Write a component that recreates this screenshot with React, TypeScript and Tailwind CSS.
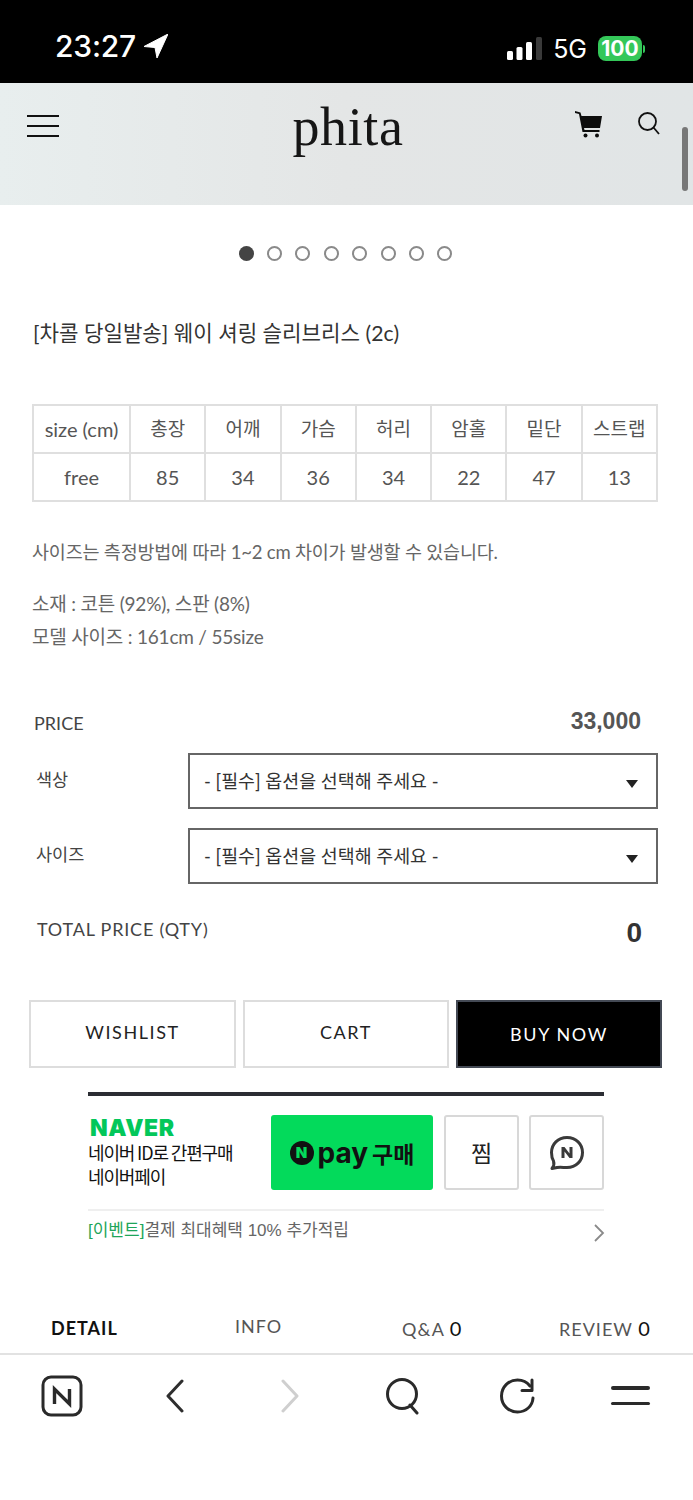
const sizeHead = ['size (cm)', '총장', '어깨', '가슴', '허리', '암홀', '밑단', '스트랩']
const sizeRow = ['free', '85', '34', '36', '34', '22', '47', '13']

function StatusBar() {
  return (
    <div className="flex h-[83px] items-start justify-between bg-black pl-[55px] pr-[48px] pt-[29px] text-white font-['Inter',sans-serif]">
      <div className="flex items-center gap-[8px]">
        <span className="text-[30px] leading-[34px] font-medium tracking-[-0.2px]">23:27</span>
        <svg width="24" height="24" viewBox="0 0 24 24" fill="white">
          <path d="M24 0 L0 12.5 L11 13.5 L13 24 Z" strokeLinejoin="round" stroke="white" strokeWidth="1" />
        </svg>
      </div>
      <div className="flex items-center pt-[5px] h-[34px]">
        <svg width="35" height="24" viewBox="0 0 35 24" className="mr-[11px]">
          <rect x="0" y="14" width="6" height="9" rx="1.5" fill="white" />
          <rect x="9.5" y="10" width="6" height="13" rx="1.5" fill="white" />
          <rect x="19" y="5" width="6" height="18" rx="1.5" fill="white" />
          <rect x="29" y="0" width="6" height="23" rx="1.5" fill="#3a3a3a" />
        </svg>
        <span className="text-[25px] leading-[30px] mr-[11px]">5G</span>
        <span className="flex h-[25px] w-[44px] items-center justify-center rounded-[8px] bg-[#34c759] text-[21px] leading-none font-bold">100</span>
        <span className="ml-[1px] h-[8px] w-[2px] rounded-r-sm bg-[#34c759]" />
      </div>
    </div>
  )
}

function Header() {
  return (
    <div className="relative flex h-[122px] items-start justify-between bg-gradient-to-r from-[#e8eeee] via-[#e4e6e6] to-[#e1e5e6] pl-[27px] pr-[32px]">
      <div className="mt-[32px] flex w-[32px] flex-col gap-[8px]">
        <span className="h-[2px] bg-[#111]" />
        <span className="h-[2px] bg-[#111]" />
        <span className="h-[2px] bg-[#111]" />
      </div>
      <span className="mt-[10px] ml-[63px] text-[54px] leading-[68px] tracking-[0.6px] text-[#161616] font-['Liberation_Serif',serif]">phita</span>
      <div className="mt-[26px] flex items-start gap-[33px]">
        <svg width="30" height="30" viewBox="0 0 30 30" fill="#0d0d0d">
          <path d="M1 2 L6.5 3.5 L7.5 7 L28 7 L26 19 L10 19 L10.5 21 L25.5 21 L25.5 23 L8.5 23 L5 5 L1 4 Z" />
          <circle cx="11.5" cy="26.5" r="2" />
          <circle cx="23" cy="26.5" r="2" />
        </svg>
        <svg width="24" height="24" viewBox="0 0 24 24" fill="none" stroke="#111" strokeWidth="1.8" className="mt-[2px]">
          <circle cx="10.5" cy="10.5" r="8.5" />
          <path d="M16.5 16.5 L22 23" />
        </svg>
      </div>
      <span className="absolute right-[5px] top-[44px] h-[64px] w-[6px] rounded-full bg-[#777]" />
    </div>
  )
}

function Dots() {
  return (
    <div className="mt-[41px] flex justify-center gap-[13.4px] pr-[2px]">
      <span className="h-[15px] w-[15px] rounded-full bg-[#444]" />
      {[1, 2, 3, 4, 5, 6, 7].map((n) => (
        <span key={n} className="h-[15px] w-[15px] rounded-full border-2 border-[#8a8a8a]" />
      ))}
    </div>
  )
}

function SizeTable() {
  return (
    <table className="mt-[58px] ml-[32px] w-[626px] table-fixed border-collapse text-[20px] text-[#555]">
      <tbody>
        {[sizeHead, sizeRow].map((row, i) => (
          <tr key={i} className="h-[48px]">
            {row.map((cell, j) => (
              <td key={j} className={`border-2 border-[#dfdfdf] p-0 text-center ${j === 0 ? 'w-[97px]' : ''} ${i === 0 && j > 0 ? 'text-[19px]' : ''}`}>
                {cell}
              </td>
            ))}
          </tr>
        ))}
      </tbody>
    </table>
  )
}

function OptionRow({ label }: { label: string }) {
  return (
    <div className="flex h-[56px] items-start">
      <span className="ml-[36px] mt-[15px] w-[152px] text-[17.5px] leading-[24px] text-[#444]">{label}</span>
      <div className="flex h-[56px] w-[470px] items-center justify-between border-2 border-[#666] pl-[14px] pr-[18px] pt-[1px] text-[18.4px] text-[#333]">
        <span>- [필수] 옵션을 선택해 주세요 -</span>
        <span className="mt-[4px] h-0 w-0 border-x-[6px] border-t-[8px] border-x-transparent border-t-[#222]" />
      </div>
    </div>
  )
}

function BuyButtons() {
  return (
    <div className="mt-[49px] ml-[29px] flex w-[633px] gap-[7px] text-[18px] tracking-[1.6px]">
      <button className="flex h-[68px] w-[207px] items-center justify-center border-2 border-[#ddd] pb-[3px] text-[#222]">WISHLIST</button>
      <button className="flex h-[68px] w-[206px] items-center justify-center border-2 border-[#ddd] pb-[3px] text-[#222]">CART</button>
      <button className="flex h-[68px] w-[206px] items-center justify-center border-2 border-[#444a55] bg-black text-white">BUY NOW</button>
    </div>
  )
}

function NaverPay() {
  return (
    <div className="mt-[24px] ml-[88px] w-[516px] border-t-4 border-[#2b2d33] font-['Liberation_Sans','Noto_Sans_CJK_KR',sans-serif]">
      <div className="flex h-[115px] items-start border-b-2 border-[#efefef] pt-[19px]">
        <div className="w-[183px]">
          <div className="ml-[2px] mt-[1px] text-[23px] leading-[24px] font-black tracking-[0.6px] text-[#03c75a] font-['Inter',sans-serif]">NAVER</div>
          <div className="text-[18px] leading-[24px] tracking-[-1.15px] text-[#111] font-['Noto_Sans_CJK_KR',sans-serif]">
            네이버 ID로 간편구매
            <br />
            네이버페이
          </div>
        </div>
        <div className="flex h-[75px] w-[162px] items-center justify-center gap-[4px] rounded-[3px] bg-[#03da5b] text-[#111]">
          <span className="flex h-[24px] w-[24px] items-center justify-center rounded-full bg-[#111] text-[15px] font-black leading-none text-[#03da5b] font-['Inter',sans-serif]">N</span>
          <span className="text-[28px] leading-[30px] font-bold font-['Inter',sans-serif]">pay</span>
          <span className="text-[23px] leading-[30px] font-bold font-['Noto_Sans_CJK_KR',sans-serif]">구매</span>
        </div>
        <div className="ml-[11px] flex h-[75px] w-[75px] items-center justify-center rounded-[3px] border-2 border-[#d8d8d8] text-[23px] text-[#222] font-['Noto_Sans_CJK_KR',sans-serif]">찜</div>
        <div className="ml-[10px] flex h-[75px] w-[75px] items-center justify-center rounded-[3px] border-2 border-[#d8d8d8]">
          <svg width="36" height="36" viewBox="0 0 36 36" fill="none">
            <path d="M18 2.5 C27 2.5 33.5 9 33.5 17.5 C33.5 26 27 32.5 18 32.5 C14.5 32.5 11 32 8 32.5 L3 33.5 C5 31 5.5 29 4.5 26 C3 23.5 2.5 20.5 2.5 17.5 C2.5 9 9 2.5 18 2.5 Z" stroke="#3a3a3a" strokeWidth="3" strokeLinejoin="round" />
            <path d="M12.5 23 V12 H15.5 L20.5 18.5 V12 H23.5 V23 H20.5 L15.5 16.5 V23 Z" fill="#3a3a3a" />
          </svg>
        </div>
      </div>
      <div className="flex items-start justify-between pt-[8px]">
        <span className="text-[17px] leading-[24px] text-[#666]">
          <span className="text-[#1ea55a]">[이벤트]</span>결제 최대혜택 10% 추가적립
        </span>
        <svg width="12" height="20" viewBox="0 0 12 20" fill="none" stroke="#8a8a8a" strokeWidth="1.8" className="mt-[4px] mr-[-1px]">
          <path d="M2 2 L10 10 L2 18" />
        </svg>
      </div>
    </div>
  )
}

function Tabs() {
  return (
    <div className="mt-[68px] flex h-[44px] items-start border-b-2 border-[#e2e2e2] text-[#555] text-[18px] leading-[24px] tracking-[1px]">
      <span className="ml-[51px] mt-[5px] w-[184px] font-bold text-[#111] tracking-[1px]">DETAIL</span>
      <span className="mt-[3px] w-[167px]">INFO</span>
      <span className="mt-[5px] w-[157px]">
        Q&amp;A <span className="text-[20px] text-[#111]">0</span>
      </span>
      <span className="mt-[5px]">
        REVIEW <span className="text-[20px] text-[#111]">0</span>
      </span>
    </div>
  )
}

function BottomNav() {
  return (
    <div className="flex h-[146px] items-start bg-white pl-[41px] pt-[20px]">
      <svg width="42" height="42" viewBox="0 0 42 42" fill="none" stroke="#2a2a2a" className="mr-[81px]">
        <rect x="2" y="2" width="38" height="38" rx="8" strokeWidth="3" />
        <path d="M13.5 29 V14 L28.5 29 V14" strokeWidth="3.4" />
      </svg>
      <svg width="22" height="34" viewBox="0 0 22 34" fill="none" stroke="#2e2e2e" strokeWidth="3" strokeLinecap="round" strokeLinejoin="round" className="mt-[4px] mr-[93px]">
        <path d="M18 2 L4 17 L18 32" />
      </svg>
      <svg width="22" height="34" viewBox="0 0 22 34" fill="none" stroke="#cfcfcf" strokeWidth="3" strokeLinecap="round" strokeLinejoin="round" className="mt-[4px] mr-[84px]">
        <path d="M4 2 L18 17 L4 32" />
      </svg>
      <svg width="38" height="38" viewBox="0 0 38 38" fill="none" stroke="#2a2a2a" strokeWidth="3" strokeLinecap="round" className="mt-[2px] mr-[76px]">
        <circle cx="17" cy="17" r="14.5" />
        <path d="M25 28 L32 36" />
      </svg>
      <svg width="36" height="36" viewBox="0 0 36 36" fill="none" stroke="#2a2a2a" strokeWidth="3" strokeLinecap="round" className="mt-[3px] mr-[76px]">
        <path d="M31 8 C28 4 23.5 2 18.5 2 C9.5 2 2.5 9 2.5 18 C2.5 27 9.5 34 18.5 34 C27 34 33.5 28 34 20" />
        <path d="M33 2 V12.5 H23" strokeLinejoin="round" />
      </svg>
      <div className="mt-[11px] flex w-[39px] flex-col gap-[12px]">
        <span className="h-[3.5px] rounded-full bg-[#2a2a2a]" />
        <span className="h-[3.5px] rounded-full bg-[#2a2a2a]" />
      </div>
    </div>
  )
}

export default function App() {
  return (
    <div className="mx-auto h-[1500px] w-[693px] overflow-hidden bg-white font-['Lato','Noto_Sans_CJK_KR',sans-serif]">
      <StatusBar />
      <Header />
      <Dots />
      <h1 className="mt-[59px] ml-[33px] text-[21.2px] leading-[26px] font-normal text-[#333]">[차콜 당일발송] 웨이 셔링 슬리브리스 (2c)</h1>
      <SizeTable />
      <div className="ml-[32px] mt-[37px] text-[18.5px] leading-[26px] tracking-[-0.2px] text-[#666]">사이즈는 측정방법에 따라 1~2 cm 차이가 발생할 수 있습니다.</div>
      <div className="ml-[32px] mt-[22px] text-[19px] leading-[33px] tracking-[-0.2px] text-[#666]">
        소재 : 코튼 (92%), 스판 (8%)
        <br />
        모델 사이즈 : 161cm / 55size
      </div>
      <div className="mt-[54px] flex h-[46px] items-start justify-between pl-[34px] pr-[52px]">
        <span className="mt-[4px] text-[18px] leading-[24px] text-[#444]">PRICE</span>
        <span className="text-[23px] leading-[28px] font-bold text-[#555] font-['Liberation_Sans',sans-serif]">33,000</span>
      </div>
      <div className="flex flex-col gap-[19px]">
        <OptionRow label="색상" />
        <OptionRow label="사이즈" />
      </div>
      <div className="mt-[33px] flex h-[34px] items-start justify-between pl-[37px] pr-[51px]">
        <span className="text-[18px] leading-[24px] tracking-[0.8px] text-[#444]">TOTAL PRICE (QTY)</span>
        <span className="mt-[1px] text-[28px] leading-[30px] font-bold text-[#333] font-['Liberation_Sans',sans-serif]">0</span>
      </div>
      <BuyButtons />
      <NaverPay />
      <Tabs />
      <BottomNav />
    </div>
  )
}
